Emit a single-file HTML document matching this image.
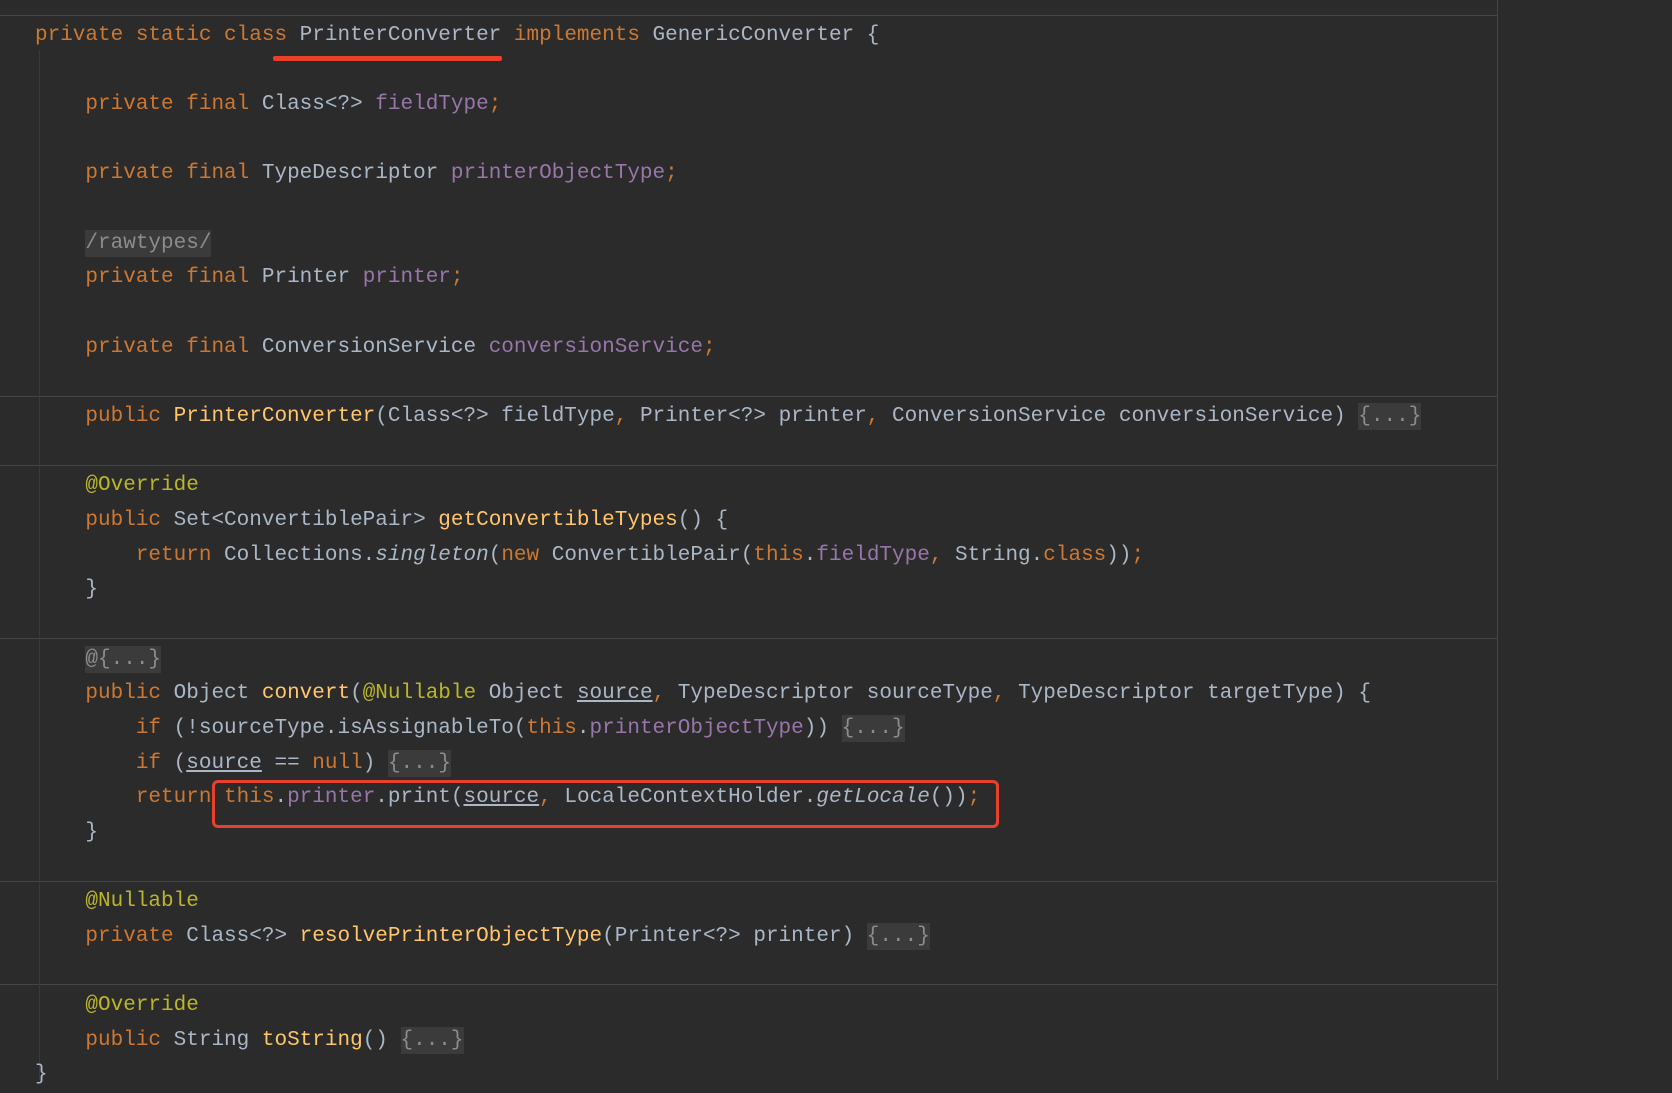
<!DOCTYPE html>
<html><head><meta charset="utf-8"><style>
body{margin:0;width:1672px;height:1080px;background:#2b2b2b;overflow:hidden;position:relative;font-family:"Liberation Mono",monospace;font-size:21px;color:#a9b7c6}
.l{position:absolute;left:35px;height:34.66px;line-height:34.66px;white-space:pre;margin-top:3px}
.k{color:#cc7832}.f{color:#9876aa}.m{color:#ffc66d}.a{color:#bbb529}
.fd{background:#3b3b3c;color:#8c8c8c;padding:2px 0}
.u{text-decoration:underline}.i{font-style:italic}
.hr{position:absolute;left:0;width:1497px;height:1px;background:#454545}
</style></head><body>
<div class="hr" style="top:15px;width:1497px"></div>
<div class="hr" style="top:396px"></div>
<div class="hr" style="top:465px"></div>
<div class="hr" style="top:638px"></div>
<div class="hr" style="top:881px"></div>
<div class="hr" style="top:984px"></div>
<div style="position:absolute;left:1497px;top:0;width:1px;height:1080px;background:#454545"></div>
<div style="position:absolute;left:39px;top:50px;width:1px;height:1030px;background:#393939"></div>
<div style="position:absolute;left:273px;top:56px;width:229px;height:5px;background:#e8402b;border-radius:2px"></div>
<div style="position:absolute;left:212px;top:780px;width:781px;height:42px;border:3px solid #e8402b;border-radius:6px"></div>

<div class="l" style="top:16px"><span class="k">private static class </span>PrinterConverter <span class="k">implements </span>GenericConverter {</div>
<div class="l" style="top:85px">    <span class="k">private final </span>Class&lt;?&gt; <span class="f">fieldType</span><span class="k">;</span></div>
<div class="l" style="top:154px">    <span class="k">private final </span>TypeDescriptor <span class="f">printerObjectType</span><span class="k">;</span></div>
<div class="l" style="top:224px">    <span class="fd">/rawtypes/</span></div>
<div class="l" style="top:258px">    <span class="k">private final </span>Printer <span class="f">printer</span><span class="k">;</span></div>
<div class="l" style="top:328px">    <span class="k">private final </span>ConversionService <span class="f">conversionService</span><span class="k">;</span></div>
<div class="l" style="top:397px">    <span class="k">public </span><span class="m">PrinterConverter</span>(Class&lt;?&gt; fieldType<span class="k">, </span>Printer&lt;?&gt; printer<span class="k">, </span>ConversionService conversionService) <span class="fd">{...}</span></div>
<div class="l" style="top:466px">    <span class="a">@Override</span></div>
<div class="l" style="top:501px">    <span class="k">public </span>Set&lt;ConvertiblePair&gt; <span class="m">getConvertibleTypes</span>() {</div>
<div class="l" style="top:536px">        <span class="k">return </span>Collections.<span class="i">singleton</span>(<span class="k">new </span>ConvertiblePair(<span class="k">this</span>.<span class="f">fieldType</span><span class="k">, </span>String.<span class="k">class</span>))<span class="k">;</span></div>
<div class="l" style="top:570px">    }</div>
<div class="l" style="top:640px">    <span class="fd">@{...}</span></div>
<div class="l" style="top:674px">    <span class="k">public </span>Object <span class="m">convert</span>(<span class="a">@Nullable </span>Object <span class="u">source</span><span class="k">, </span>TypeDescriptor sourceType<span class="k">, </span>TypeDescriptor targetType) {</div>
<div class="l" style="top:709px">        <span class="k">if </span>(!sourceType.isAssignableTo(<span class="k">this</span>.<span class="f">printerObjectType</span>)) <span class="fd">{...}</span></div>
<div class="l" style="top:744px">        <span class="k">if </span>(<span class="u">source</span> == <span class="k">null</span>) <span class="fd">{...}</span></div>
<div class="l" style="top:778px">        <span class="k">return </span><span class="k">this</span>.<span class="f">printer</span>.print(<span class="u">source</span><span class="k">, </span>LocaleContextHolder.<span class="i">getLocale</span>())<span class="k">;</span></div>
<div class="l" style="top:813px">    }</div>
<div class="l" style="top:882px">    <span class="a">@Nullable</span></div>
<div class="l" style="top:917px">    <span class="k">private </span>Class&lt;?&gt; <span class="m">resolvePrinterObjectType</span>(Printer&lt;?&gt; printer) <span class="fd">{...}</span></div>
<div class="l" style="top:986px">    <span class="a">@Override</span></div>
<div class="l" style="top:1021px">    <span class="k">public </span>String <span class="m">toString</span>() <span class="fd">{...}</span></div>
<div class="l" style="top:1055px">}</div>
</body></html>
